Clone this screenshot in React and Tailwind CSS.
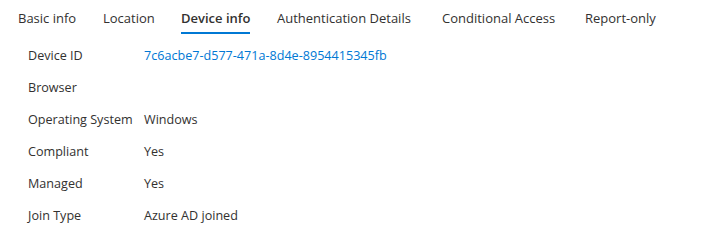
export default function App() {
  const tabs = [
    ["Basic info", "w-[85px]"],
    ["Location", "w-[78px]"],
    ["Device info", "w-[96px]"],
    ["Authentication Details", "w-[165px]"],
    ["Conditional Access", "w-[143px]"],
    ["Report-only", "w-[90px]"],
  ];
  const rows = [
    ["Device ID", "7c6acbe7-d577-471a-8d4e-8954415345fb", true],
    ["Browser", "", false],
    ["Operating System", "Windows", false],
    ["Compliant", "Yes", false],
    ["Managed", "Yes", false],
    ["Join Type", "Azure AD joined", false],
  ];
  return (
    <div className="w-[717px] h-[250px] bg-white text-[#323130]" style={{ fontFamily: '"Segoe UI", "Open Sans", sans-serif' }}>
      <div className="flex pl-[18px] text-[13px]">
        {tabs.map(([t, w]) => (
          <div key={t} className={"flex " + w}>
            <span
              className={
                "pt-[8px] pb-[4px] leading-[20px] border-b-2 " +
                (t === "Device info" ? "border-[#0078d4] font-semibold" : "border-transparent")
              }
            >
              {t}
            </span>
          </div>
        ))}
      </div>
      <div className="pt-[6px] pl-[28px]">
        {rows.map(([k, v, link]) => (
          <div key={k} className="flex h-[32px] items-center text-[12.6px]">
            <span className="w-[116px]">{k}</span>
            <span className={link ? "text-[#0078d4]" : ""}>{v}</span>
          </div>
        ))}
      </div>
    </div>
  );
}
